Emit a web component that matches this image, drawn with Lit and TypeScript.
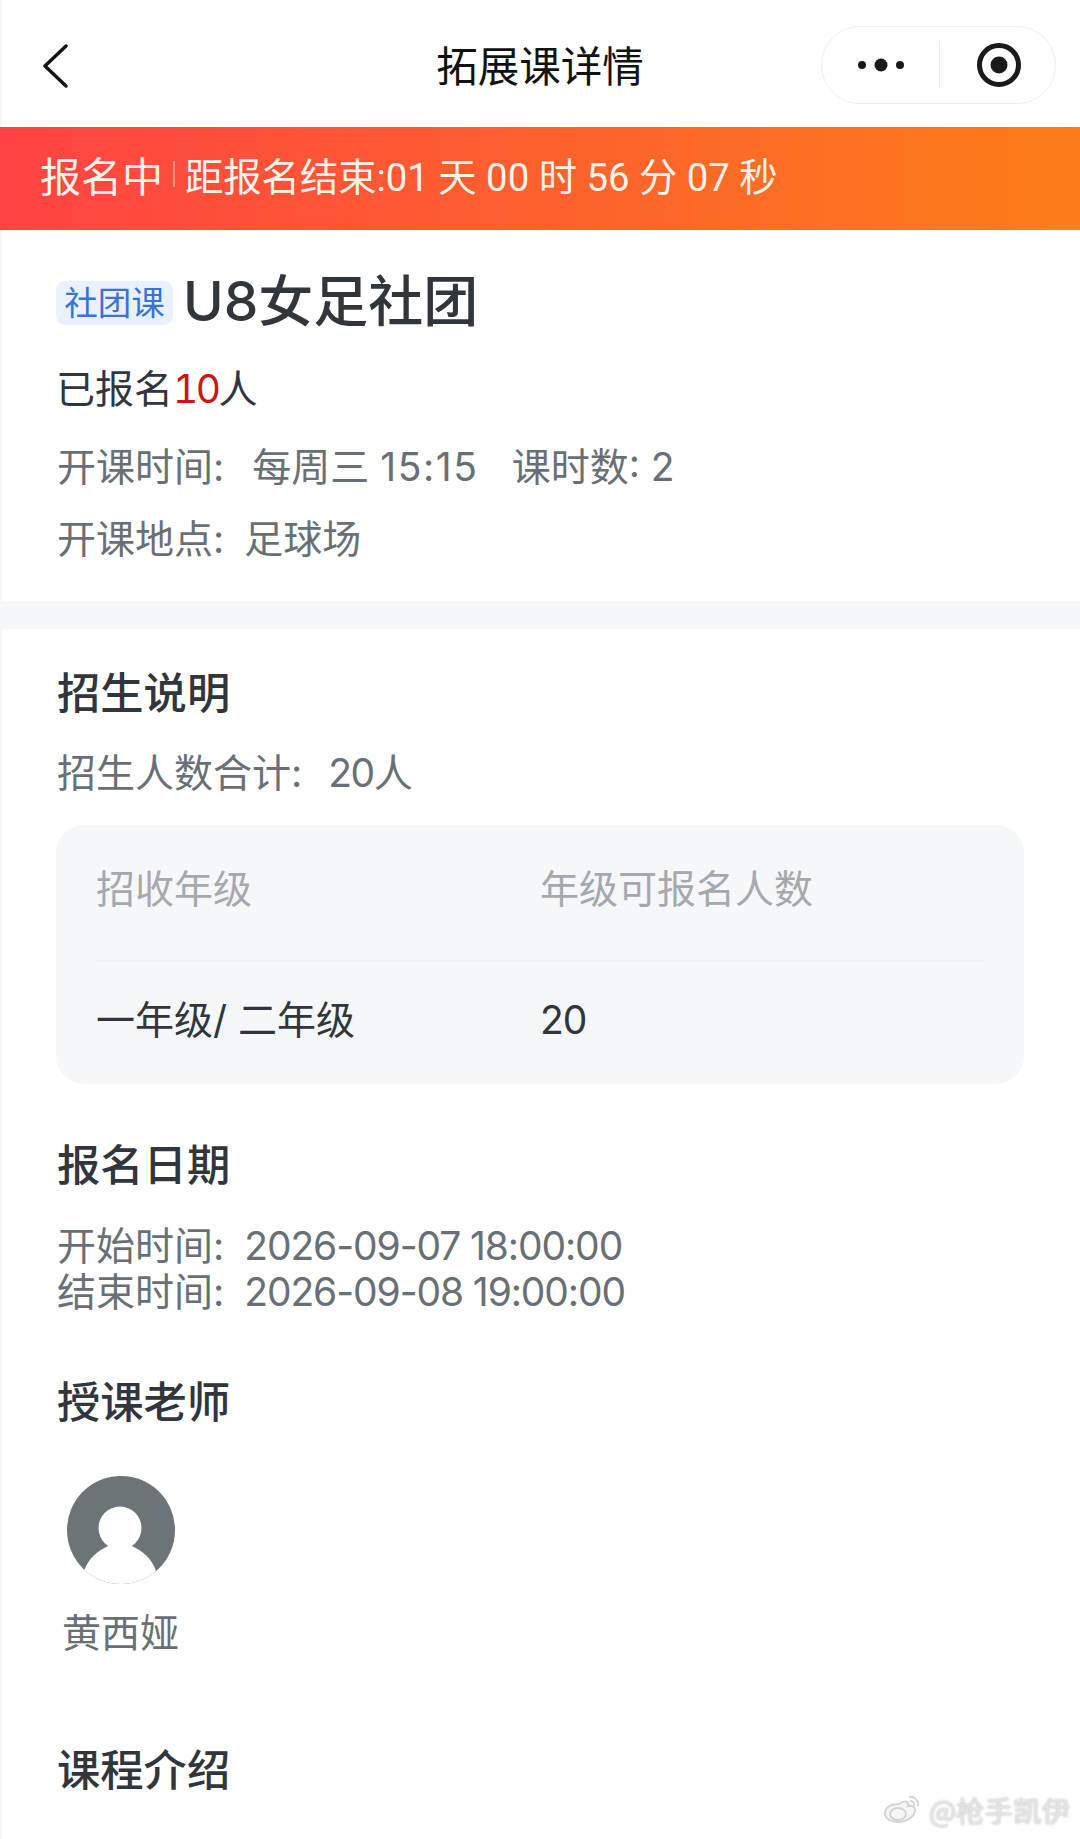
import { LitElement, html, css } from "lit";
import { customElement } from "lit/decorators.js";

@customElement("app-root")
export class AppRoot extends LitElement {
  static styles = css`
    :host { display: block; width: 1080px; height: 1839px; overflow: hidden; background: #fff; position: relative;
      font-family: Inter, "Noto Sans CJK SC", sans-serif; color: #30363b; }
    .page { border-left: 2px solid #f6f6f6; height: 100%; box-sizing: border-box; }
    .nav { height: 127px; position: relative; display: flex; align-items: center; justify-content: center; margin-left: -2px; }
    .nav-title { font-size: 41.5px; color: #111; font-family: "Noto Sans CJK SC", sans-serif; font-weight: 400; }
    .back { position: absolute; left: 42px; top: 44px; }
    .capsule { position: absolute; left: 821px; top: 26px; width: 235px; height: 78px; box-sizing: border-box;
      border: 1.5px solid #efefef; border-radius: 39px; display: flex; align-items: center; }
    .cap-l { width: 117px; display: flex; justify-content: center; }
    .cap-div { width: 1px; height: 48px; background: #eee; }
    .cap-r { flex: 1; display: flex; justify-content: center; padding-left: 2px; }
    .banner { height: 103px; box-sizing: border-box; padding: 0 0 9px 40px; margin-left: -2px; background: linear-gradient(90deg, #ff4343, #fc7e18); color: #fff3ea;
      display: flex; align-items: center; font-size: 38.3px; font-family: "Noto Sans CJK SC", sans-serif; }
    .status { font-size: 41px; }
    .sep { width: 2px; height: 26px; background: rgba(255,255,255,.35); margin: 0 10px 0 10px; }
    .count { font-family: Roboto, "Noto Sans CJK SC", sans-serif; }
    .info { padding: 0 0 0 54px; height: 371px; box-sizing: border-box; }
    .title-row { display: flex; align-items: center; padding-top: 49px; padding-bottom: 3px; height: 44px; box-sizing: content-box; }
    .tag { width: 117px; height: 44px; box-sizing: border-box; padding-bottom: 5px; margin-top: 3px; border-radius: 9px; background: #e9f1fd; color: #3a72d8; font-size: 33.5px;
      display: flex; align-items: center; justify-content: center; font-family: "Noto Sans CJK SC", sans-serif; }
    .title { font-size: 55px; font-weight: 500; margin-left: 10px; line-height: 44px; }
    .enrolled { font-size: 39px; line-height: 50px; margin: 38px 0 0 0; }
    .enrolled b { color: #cf1414; font-weight: 400; letter-spacing: -2.5px; font-variant-numeric: tabular-nums; }
    .meta { font-size: 39px; line-height: 50px; color: #697075; white-space: pre; }
    .ind { margin-left: 1px; }
    .m1 { margin-top: 28px; }
    .m2 { margin-top: 22px; }
    .gl { margin-left: 28px; }
    .gs { margin-left: 20px; }
    .gb { margin-left: 33px; }
    .gn { margin-left: 26px; letter-spacing: -1.5px; }
    .gd { margin-left: 20px; }
    .time { letter-spacing: 1.6px; }
    .date { letter-spacing: -1.1px; }
    .gap { height: 28px; background: #f5f7f9; margin-left: -2px; }
    .sec { padding: 0 0 0 55px; }
    h2 { margin: 0; font-size: 43.3px; font-weight: 500; line-height: 50px; color: #30363b; }
    .card { width: 968px; height: 259px; margin-left: -1px; box-sizing: border-box; background: #f6f7f9; border-radius: 28px; padding: 0 39px 0 40px; }
    .row { display: grid; grid-template-columns: 444px 1fr; align-items: center; font-size: 39px; line-height: 50px; }
    .hd { height: 137px; color: #a5a9ad; border-bottom: 2px solid #eff0f2; box-sizing: border-box; padding-bottom: 7px; }
    .bd { height: 122px; color: #30363b; padding-bottom: 7px; box-sizing: border-box; }
    .num { letter-spacing: -1px; }
    .avatar { display: block; margin: 0 0 0 10px; }
    .name { font-size: 39px; color: #697075; line-height: 50px; margin: 24px 0 0 5px; }
    .wm { position: absolute; right: 10px; top: 1790px; display: flex; align-items: center; gap: 5px; color: #e4e4e4;
      font-size: 28.5px; font-family: "Noto Sans CJK SC", sans-serif; text-shadow: 0 0 3px #bbb; line-height: 40px; }
  `;
  render() {
    return html`<div class="page">
      <div class="nav">
        <svg class="back" width="28" height="44" viewBox="0 0 28 44" fill="none" stroke="#111" stroke-width="3.4" stroke-linecap="round" stroke-linejoin="round"><path d="M24 2 3 22l21 20"/></svg>
        <div class="nav-title">拓展课详情</div>
        <div class="capsule">
          <div class="cap-l"><svg width="48" height="16" viewBox="0 0 48 16" fill="#1a1a1a"><circle cx="5" cy="8" r="4"/><circle cx="24" cy="8" r="6.5"/><circle cx="43" cy="8" r="4"/></svg></div>
          <div class="cap-div"></div>
          <div class="cap-r"><svg width="46" height="46" viewBox="0 0 46 46"><circle cx="23" cy="23" r="19.5" fill="none" stroke="#1a1a1a" stroke-width="5"/><circle cx="23" cy="23" r="8.5" fill="#1a1a1a"/></svg></div>
        </div>
      </div>
      <div class="banner"><span class="status">报名中</span><span class="sep"></span><span class="count">距报名结束:01 天 00 时 56 分 07 秒</span></div>
      <div class="info">
        <div class="title-row"><span class="tag">社团课</span><span class="title">U8女足社团</span></div>
        <div class="enrolled">已报名<b>10</b>人</div>
        <div class="meta m1 ind">开课时间:<span class="gl">每周三 </span><span class="time">15:15</span><span class="gb">课时数: 2</span></div>
        <div class="meta m2 ind">开课地点:<span class="gs">足球场</span></div>
      </div>
      <div class="gap"></div>
      <div class="sec">
        <h2 style="margin-top:39px">招生说明</h2>
        <div class="meta" style="margin-top:30px">招生人数合计:<span class="gn">20人</span></div>
        <div class="card" style="margin-top:27px">
          <div class="row hd"><span>招收年级</span><span>年级可报名人数</span></div>
          <div class="row bd"><span>一年级/ 二年级</span><span class="num">20</span></div>
        </div>
        <h2 style="margin-top:56px">报名日期</h2>
        <div class="meta" style="margin-top:33px;line-height:46px">开始时间:<span class="gd date">2026-09-07 18:00:00</span></div>
        <div class="meta" style="line-height:46px">结束时间:<span class="gd date">2026-09-08 19:00:00</span></div>
        <h2 style="margin-top:62px">授课老师</h2>
        <svg class="avatar" style="margin-top:49px" width="108" height="108" viewBox="0 0 108 108">
          <defs><clipPath id="c"><circle cx="54" cy="54" r="54"/></clipPath></defs>
          <g clip-path="url(#c)"><rect width="108" height="108" fill="#6c7478"/>
          <circle cx="53" cy="52" r="21.5" fill="#fff"/>
          <path d="M17 95C22 81 31 75 41 70H65C75 75 84 81 89 95L88 108H18z" fill="#fff"/></g>
        </svg>
        <div class="name">黄西娅</div>
        <h2 style="margin-top:87px">课程介绍</h2>
      </div>
      <div class="wm">
        <svg width="42" height="36" viewBox="0 0 40 36" fill="none" stroke="#d4d4d4" stroke-width="2"><path d="M16 12c4-3 8-3 9-1 1 1 0 3 0 3 4-1 7 1 7 4 0 6-8 12-17 12C8 30 2 27 2 21c0-4 4-9 14-9z" fill="#f6f6f6"/><ellipse cx="15" cy="22" rx="8" ry="6"/><path d="M26 5c5-1 10 3 9 9M27 9c3 0 5 2 4 5"/></svg>
        <span>@枪手凯伊</span>
      </div>
    </div>`;
  }
}
